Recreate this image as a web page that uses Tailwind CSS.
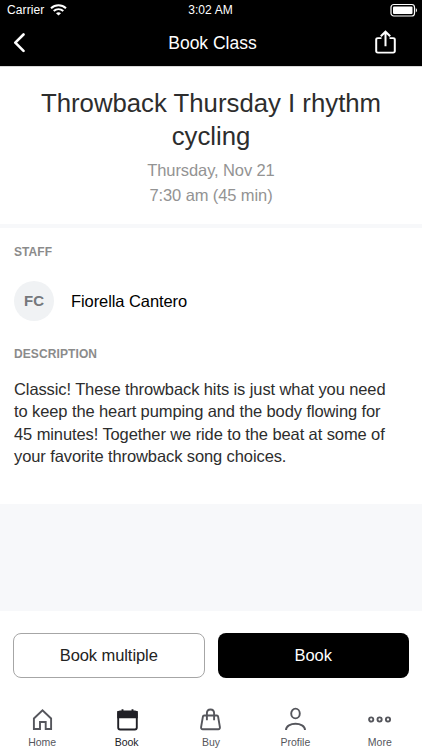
<!DOCTYPE html>
<html lang="en">
<head>
<meta charset="utf-8">
<meta name="viewport" content="width=device-width, initial-scale=1">
<title>Book Class</title>
<script src="https://cdn.jsdelivr.net/npm/@tailwindcss/browser@4"></script>
</head>
<body class="bg-white">
<div class="flex h-[750px] w-[422px] flex-col overflow-hidden bg-white font-['Liberation_Sans',Arial,sans-serif] text-[#2d2d2d]">
  <header class="h-[66px] shrink-0 bg-black text-white">
    <div class="grid h-[20px] grid-cols-3 items-center pl-[7px] pr-[4px] text-[12px] leading-none">
      <div class="flex items-center gap-[6px]">
        <span class="tracking-[0.1px]">Carrier</span>
        <svg class="h-[12px] w-[17px]" viewBox="0 0 17 12" fill="none" stroke="#fff" stroke-width="2"><path d="M1 4.300C5.300.3 11.700.3 16 4.300M3.700 7.100c2.800-2.500 6.800-2.500 9.600 0"/><path d="M8.500 11.600 6 9.200c1.400-1.200 3.600-1.200 5 0z" fill="#fff" stroke="none"/></svg>
      </div>
      <span class="pr-[4px] text-center tracking-[0.100px]">3:02 AM</span>
      <svg class="h-[14px] w-[28px] justify-self-end" viewBox="0 0 28 14"><rect x="1" y="1.500" width="23.500" height="11.500" rx="2.800" fill="none" stroke="#fff" stroke-width="1.200"/><rect x="3" y="3.500" width="19.500" height="7.500" rx="1" fill="#fff"/><path d="M25.800 5v4.500c1.600-.7 1.600-3.800 0-4.500z" fill="#fff"/></svg>
    </div>
    <div class="grid h-[46px] grid-cols-3 items-center pl-[13px] pr-[25px]">
      <svg class="h-[20px] w-[13px]" viewBox="0 0 13 20" fill="none" stroke="#fff" stroke-width="2.600" stroke-linecap="round" stroke-linejoin="round"><path d="M10.500 1.500 2.300 9.700l8.200 8.200"/></svg>
      <h1 class="pl-[15px] text-center text-[17.500px] whitespace-nowrap">Book Class</h1>
      <svg class="mr-[1px] mb-[2px] h-[24px] w-[21px] justify-self-end" viewBox="0 0 21 25" preserveAspectRatio="none" fill="none" stroke="#fff" stroke-width="2"><path d="M6.500 8.500H2.800c-1 0-1.600.6-1.600 1.600V22c0 1 .6 1.600 1.600 1.600h15.400c1 0 1.600-.6 1.600-1.600V10.100c0-1-.6-1.600-1.600-1.600h-3.700M10.500 17V2M5.800 6.500l4.700-4.700 4.700 4.700"/></svg>
    </div>
  </header>
  <section class="flex h-[158px] shrink-0 flex-col items-center border-t border-[#d8d8d8] pt-[20px] text-center">
    <h2 class="text-[25.750px] leading-[33px] whitespace-nowrap">Throwback Thursday I rhythm<br>cycling</h2>
    <p class="mt-[5px] text-[16.500px] leading-[24.500px] tracking-[-0.100px] text-[#939393]">Thursday, Nov 21<br>7:30 am (45 min)</p>
  </section>
  <div class="h-[4px] shrink-0 bg-[#f7f8fa]"></div>
  <main class="h-[276px] shrink-0 px-[14px] pt-[16px]">
    <h3 class="text-[12px] leading-[16px] font-bold tracking-[0.050px] text-[#8b8b8b]">STAFF</h3>
    <div class="mt-[21px] flex items-center gap-[17px]">
      <div class="flex size-[40px] items-center justify-center rounded-full bg-[#f0f2f4] text-[15px] font-bold text-[#75787c]">FC</div>
      <span class="text-[16.500px] tracking-[-0.080px] text-black">Fiorella Cantero</span>
    </div>
    <h3 class="mt-[25px] text-[12px] leading-[16px] font-bold tracking-[0.100px] text-[#8b8b8b]">DESCRIPTION</h3>
    <p class="mt-[16px] text-[16.500px] leading-[22.400px] tracking-[-0.100px] whitespace-nowrap">Classic! These throwback hits is just what you need<br>to keep the heart pumping and the body flowing for<br>45 minutes! Together we ride to the beat at some of<br>your favorite throwback song choices.</p>
  </main>
  <div class="h-[107px] shrink-0 bg-[#f7f8fa]"></div>
  <div class="grid shrink-0 grid-cols-2 gap-[13px] px-[13px] pt-[22px] text-[16.500px]">
    <button class="h-[45px] rounded-[8px] border border-[#a6a6a6] tracking-[-0.080px] text-[#232323]">Book multiple</button>
    <button class="h-[45px] rounded-[8px] bg-black text-white">Book</button>
  </div>
  <nav class="grid flex-1 grid-cols-5 pt-[29px] text-[10.500px] leading-[12px] text-[#55565c]">
    <div class="flex flex-col items-center gap-[4px]"><svg class="size-[25px]" viewBox="0 0 25 25" fill="none" stroke="currentColor" stroke-width="1.900"><path d="M3.900 11.500 12.500 3.200l8.600 8.300V22h-5.400v-7H10v7H3.900z"/></svg><span>Home</span></div>
    <div class="flex flex-col items-center gap-[4px] text-[#202026]"><svg class="size-[25px]" viewBox="0 0 25 25" fill="none" stroke="currentColor" stroke-width="1.900"><rect x="4.200" y="4.500" width="18.600" height="18" rx="2"/><path d="M4.200 5h18.600v5.200H4.200z" fill="currentColor"/><path d="M8.500 2.300V5M18.500 2.300V5"/></svg><span>Book</span></div>
    <div class="flex flex-col items-center gap-[4px]"><svg class="size-[25px]" viewBox="0 0 25 25" fill="none" stroke="currentColor" stroke-width="1.900"><path d="M6.200 8.500h12.600c.8 0 1.200.4 1.300 1.100l1.800 10.600c.2 1.200-.5 2-1.600 2H4.700c-1.100 0-1.800-.8-1.600-2L4.900 9.600c.1-.7.500-1.100 1.300-1.100zM8.900 13.200V6.300c0-5.100 7.200-5.100 7.200 0v6.900"/></svg><span>Buy</span></div>
    <div class="flex flex-col items-center gap-[4px]"><svg class="size-[25px]" viewBox="0 0 25 25" fill="none" stroke="currentColor" stroke-width="1.900"><ellipse cx="12.500" cy="6.500" rx="4.300" ry="4.900"/><path d="M3 23c0-8.300 19-8.300 19 0"/></svg><span>Profile</span></div>
    <div class="flex flex-col items-center gap-[4px]"><svg class="size-[25px]" viewBox="0 0 25 25" fill="none" stroke="currentColor" stroke-width="1.900"><circle cx="4.200" cy="12.500" r="2.100"/><circle cx="12.600" cy="12.500" r="2.100"/><circle cx="21" cy="12.500" r="2.100"/></svg><span>More</span></div>
  </nav>
</div>
</body>
</html>
